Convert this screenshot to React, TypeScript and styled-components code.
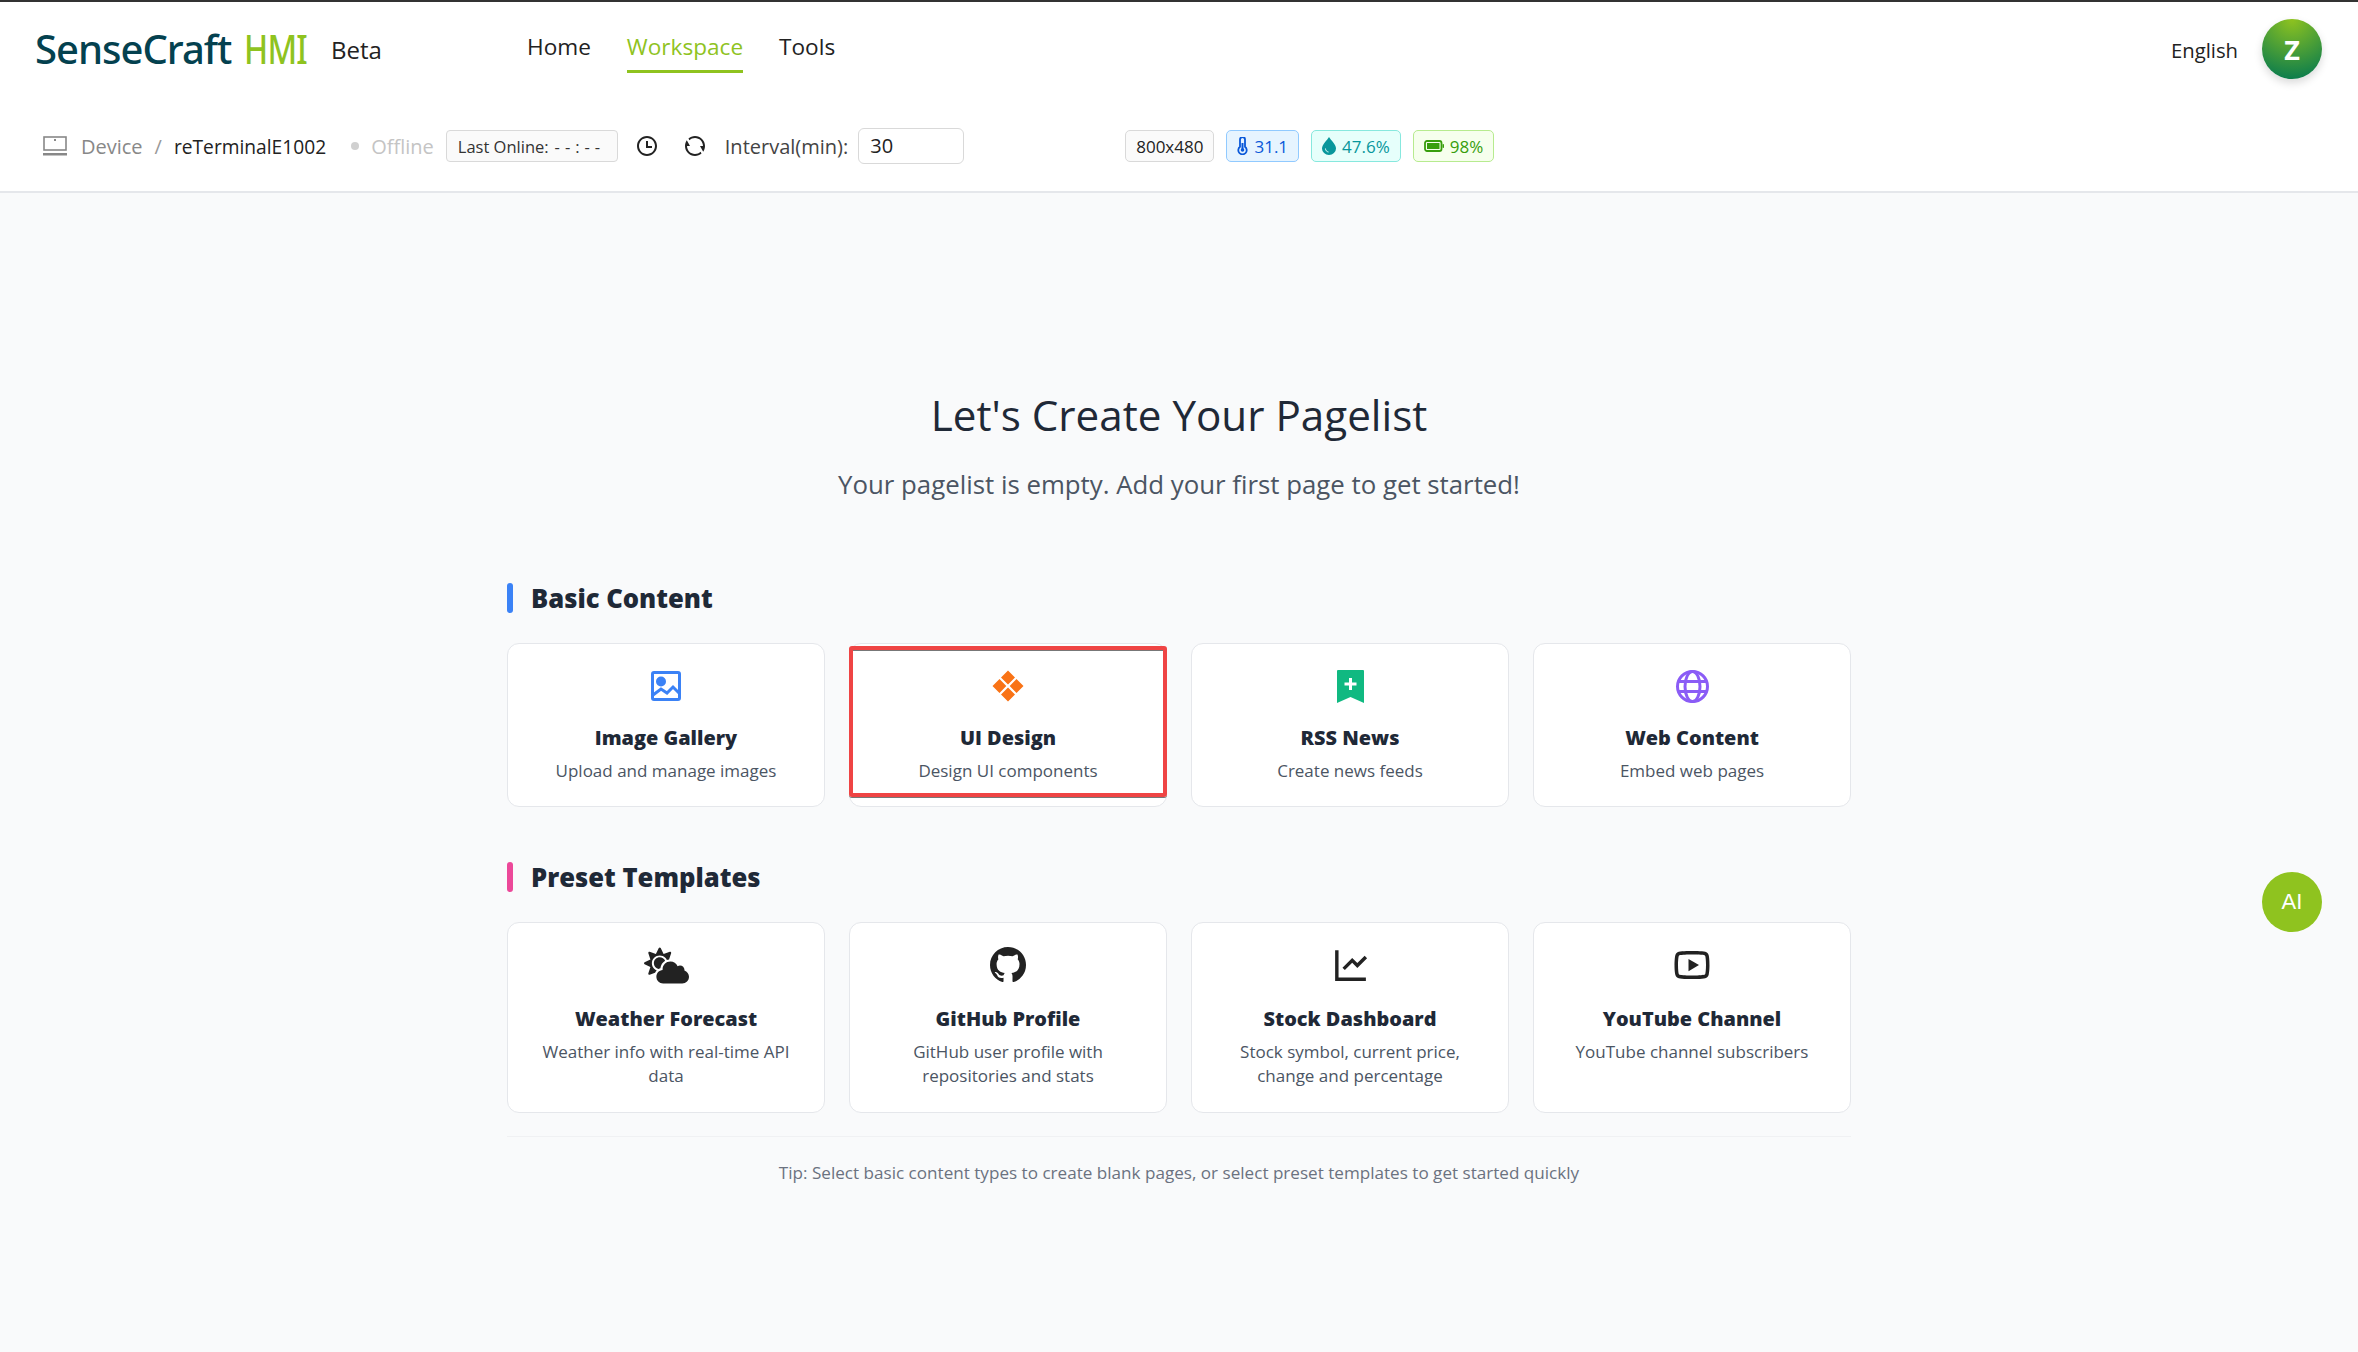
import React from "react";
import styled, { createGlobalStyle } from "styled-components";
import {
  RiLineChartLine,
  RiRefreshLine,
  RiTimeLine,
  RiYoutubeLine,
} from "react-icons/ri";
import { FaCloudSun } from "react-icons/fa";
import { BsGithub } from "react-icons/bs";

const GlobalStyle = createGlobalStyle`
  html, body {
    margin: 0;
    padding: 0;
    background: #f9fafb;
    font-family: "Open Sans", "Noto Sans", sans-serif;
  }
  * { box-sizing: border-box; }
`;

const Page = styled.div`
  position: relative;
  height: 1352px;
  display: flex;
  flex-direction: column;
  border-top: 2px solid #333;
  background: #f9fafb;
  overflow: hidden;
`;

const Top = styled.header`
  background: #fff;
  border-bottom: 2px solid #e5e7eb;
  height: 191px;
  flex: none;
`;

const HeaderRow = styled.div`
  height: 94px;
  display: flex;
  align-items: center;
  padding: 0 36px 0 35px;
`;

const Logo = styled.div`
  width: 296px;
  font-size: 40px;
  font-weight: 500;
  font-family: "Noto Sans", sans-serif;
  letter-spacing: -1px;
  color: #04414f;
  line-height: 1;
`;

const LogoAccent = styled.span`
  display: inline-block;
  margin-left: 3px;
  color: #8fc31f;
  transform: scaleX(0.81);
  transform-origin: left center;
`;

const BetaTag = styled.span`
  font-size: 24px;
  color: #222;
  width: 196px;
`;

const Nav = styled.nav`
  display: flex;
  gap: 36px;
  flex: 1;
`;

const NavItem = styled.a<{ $active?: boolean }>`
  font-size: 22.6px;
  height: 48px;
  padding-top: 9px;
  line-height: 26px;
  color: ${(p) => (p.$active ? "#8fc31f" : "#222")};
  border-bottom: 3px solid ${(p) => (p.$active ? "#8fc31f" : "transparent")};
`;

const Lang = styled.span`
  font-size: 20.3px;
  color: #222;
  margin-right: 24px;
  padding-top: 2px;
`;

const Avatar = styled.div`
  width: 60px;
  height: 60px;
  border-radius: 50%;
  background: radial-gradient(circle at 50% 0%, #8fc31f, #05794f 95%);
  box-shadow: 0 4px 8px rgba(0, 0, 0, 0.15);
  color: #fff;
  font-weight: 700;
  font-size: 27px;
  display: flex;
  align-items: center;
  justify-content: center;
`;

const InfoRow = styled.div`
  display: flex;
  align-items: center;
  height: 50px;
  margin-top: 25px;
  padding-left: 43px;
  font-size: 20px;
`;

const DeviceGlyph = styled.svg`
  width: 24px;
  height: 20px;
  margin-right: 14px;
  color: #888;
`;

const Crumb = styled.span`
  color: #888;
`;

const CurrentCrumb = styled.span`
  color: #222;
  font-size: 19.2px;
`;

const Slash = styled.span`
  color: #999;
  margin: 0 12px;
`;

const Dot = styled.i`
  width: 8px;
  height: 8px;
  border-radius: 50%;
  background: #d0d0d0;
  margin: 0 12px 0 25px;
`;

const OfflineText = styled.span`
  color: #c4c4c4;
`;

const LastOnline = styled.div`
  height: 32px;
  width: 172px;
  margin-left: 12px;
  padding-left: 11px;
  border: 1px solid #d9d9d9;
  border-radius: 4px;
  background: #fafafa;
  font-size: 16.5px;
  color: #333;
  display: flex;
  align-items: center;
  white-space: pre;
`;

const Dashes = styled.span`
  letter-spacing: 5px;
  margin-left: 6px;
`;

const ToolIcon = styled.span<{ $gap: number }>`
  display: flex;
  margin-left: ${(p) => p.$gap}px;
  font-size: 24px;
  color: #222;
`;

const IntervalLabel = styled.span`
  margin-left: 18px;
  color: #444;
`;

const IntervalInput = styled.div`
  width: 106px;
  height: 36px;
  margin-left: 10px;
  padding: 0 11px;
  border: 1px solid #d9d9d9;
  border-radius: 6px;
  color: #222;
  line-height: 34px;
`;

const Tags = styled.div`
  display: flex;
  gap: 12px;
  margin-left: 161px;
`;

const Tag = styled.div<{ $bg: string; $line: string; $fg: string }>`
  height: 32px;
  padding: 0 10px;
  display: flex;
  align-items: center;
  gap: 6px;
  border: 1px solid ${(p) => p.$line};
  border-radius: 5px;
  background: ${(p) => p.$bg};
  color: ${(p) => p.$fg};
  font-size: 17px;
`;

const Main = styled.main`
  width: 1344px;
  margin: 0 auto;
  padding-top: 196px;
`;

const Title = styled.h1`
  margin: 0;
  text-align: center;
  font-size: 42.2px;
  line-height: 52px;
  font-weight: 400;
  color: #1f2937;
`;

const Sub = styled.p`
  margin: 25px 0 0;
  text-align: center;
  font-size: 25.8px;
  line-height: 36px;
  color: #4b5563;
`;

const SectionHead = styled.h2<{ $accent: string; $top: number }>`
  margin: ${(p) => p.$top}px 0 30px;
  height: 30px;
  display: flex;
  align-items: center;
  gap: 18px;
  font-size: 25.6px;
  font-weight: 800;
  color: #1f2937;
  &::before {
    content: "";
    width: 6px;
    height: 30px;
    border-radius: 3px;
    background: ${(p) => p.$accent};
  }
`;

const Grid = styled.div`
  display: grid;
  grid-template-columns: repeat(4, 1fr);
  gap: 24px;
`;

const Card = styled.div<{ $tall?: boolean }>`
  position: relative;
  height: ${(p) => (p.$tall ? 191 : 164)}px;
  padding: 24px 28px 0;
  background: #fff;
  border: 1px solid #e5e7eb;
  border-radius: 12px;
  text-align: center;
`;

const IconSlot = styled.div<{ $color: string }>`
  height: 36px;
  display: flex;
  align-items: center;
  justify-content: center;
  color: ${(p) => p.$color};
  font-size: 36px;
`;

const CardTitle = styled.div<{ $tall?: boolean }>`
  margin-top: ${(p) => (p.$tall ? 22 : 20)}px;
  font-size: 19.9px;
  line-height: 28px;
  font-weight: 800;
  color: #1f2937;
`;

const CardText = styled.div`
  margin-top: 7px;
  font-size: 17px;
  line-height: 24px;
  color: #4b5563;
`;

const Highlight = styled.div`
  position: absolute;
  left: -1px;
  right: -1px;
  top: 2px;
  bottom: 9px;
  border: 4px solid #ef4444;
  border-radius: 3px;
  box-shadow: inset 0 1px 0 #777, 0 1px 0 #777;
`;

const Tip = styled.div`
  margin-top: 23px;
  padding-top: 24px;
  border-top: 1px solid #f0f1f3;
  text-align: center;
  font-size: 17.1px;
  line-height: 24px;
  color: #6b7280;
`;

const AiButton = styled.div`
  position: absolute;
  left: 2262px;
  top: 870px;
  width: 60px;
  height: 60px;
  border-radius: 50%;
  background: #8fc31f;
  color: #fff;
  font-family: "Liberation Sans", sans-serif;
  font-size: 22px;
  display: flex;
  align-items: center;
  justify-content: center;
`;

const DeviceIcon = () => (
  <DeviceGlyph viewBox="0 0 24 20" fill="none">
    <rect x="1" y="1" width="22" height="13" stroke="currentColor" strokeWidth="1.600" />
    <rect x="11" y="3" width="2" height="2" fill="currentColor" />
    <rect x="0" y="17" width="24" height="2.500" fill="currentColor" />
  </DeviceGlyph>
);

const ThermoIcon = () => (
  <svg width="11" height="18" viewBox="0 0 11 18" fill="none">
    <path
      d="M3 2.500a2.500 2.500 0 0 1 5 0v7.300a4.200 4.200 0 1 1-5 0z"
      stroke="currentColor"
      strokeWidth="1.800"
    />
    <path d="M5.500 6v7" stroke="currentColor" strokeWidth="2" />
    <circle cx="5.500" cy="13" r="1.800" fill="currentColor" />
  </svg>
);

const DropIcon = () => (
  <svg width="14" height="18" viewBox="0 0 14 18">
    <path d="M7 0c2 3.500 7 7.500 7 11.500A7 6.500 0 0 1 0 11.500C0 7.500 5 3.500 7 0z" fill="currentColor" />
    <path d="M3.500 11.500c0 2 1.200 3.200 3 3.500" stroke="#e6fffb" strokeWidth="1" fill="none" />
  </svg>
);

const BatteryIcon = () => (
  <svg width="20" height="12" viewBox="0 0 20 12" fill="none">
    <rect x="1" y="1" width="16.500" height="10" rx="2" stroke="currentColor" strokeWidth="1.800" />
    <rect x="3" y="3" width="12.500" height="6" fill="currentColor" />
    <rect x="18.500" y="4" width="1.500" height="4" rx="0.700" fill="currentColor" />
  </svg>
);

const ImageIcon = () => (
  <svg width="30" height="30" viewBox="0 0 30 30" fill="none">
    <rect x="1.500" y="1.500" width="27" height="27" rx="1.500" stroke="currentColor" strokeWidth="3" />
    <circle cx="10" cy="10.500" r="5" fill="currentColor" />
    <path d="M2 24l8-6 6 4 6-6 6 6" stroke="currentColor" strokeWidth="3" />
  </svg>
);

const DiamondsIcon = () => (
  <svg width="32" height="32" viewBox="0 0 32 32" fill="currentColor">
    <path d="M16 .5l7 7-7 7-7-7zM7.500 9l6.800 7-6.800 7-7-7zM24.500 9l7 7-7 7-6.800-7zM16 17.500l7 7-7 7-7-7z" />
  </svg>
);

const BookmarkPlusIcon = () => (
  <svg width="27" height="33" viewBox="0 0 27 33">
    <path d="M1 0h25a1 1 0 0 1 1 1v32l-13.500-6L0 33V1a1 1 0 0 1 1-1z" fill="currentColor" />
    <path d="M13.500 8v12M7.500 14h12" stroke="#fff" strokeWidth="3" />
  </svg>
);

const GlobeIcon = () => (
  <svg width="33" height="33" viewBox="0 0 33 33" fill="none" stroke="currentColor" strokeWidth="3">
    <circle cx="16.500" cy="16.500" r="15" />
    <ellipse cx="16.500" cy="16.500" rx="7.500" ry="15" />
    <path d="M2 11.500h29M2 21.500h29" />
  </svg>
);

const basics = [
  { title: "Image Gallery", text: "Upload and manage images", color: "#3b82f6", icon: <ImageIcon /> },
  { title: "UI Design", text: "Design UI components", color: "#f97316", icon: <DiamondsIcon />, marked: true },
  { title: "RSS News", text: "Create news feeds", color: "#10b981", icon: <BookmarkPlusIcon /> },
  { title: "Web Content", text: "Embed web pages", color: "#8b5cf6", icon: <GlobeIcon /> },
];

const presets = [
  { title: "Weather Forecast", text: "Weather info with real-time API data", icon: <FaCloudSun size={45} /> },
  { title: "GitHub Profile", text: "GitHub user profile with repositories and stats", icon: <BsGithub size={36} /> },
  { title: "Stock Dashboard", text: "Stock symbol, current price, change and percentage", icon: <RiLineChartLine size={41} /> },
  { title: "YouTube Channel", text: "YouTube channel subscribers", icon: <RiYoutubeLine size={42} /> },
];

const App: React.FC = () => {
  return (
    <Page>
      <GlobalStyle />
      <Top>
        <HeaderRow>
          <Logo>
            SenseCraft <LogoAccent>HMI</LogoAccent>
          </Logo>
          <BetaTag>Beta</BetaTag>
          <Nav>
            <NavItem>Home</NavItem>
            <NavItem $active>Workspace</NavItem>
            <NavItem>Tools</NavItem>
          </Nav>
          <Lang>English</Lang>
          <Avatar>Z</Avatar>
        </HeaderRow>
        <InfoRow>
          <DeviceIcon />
          <Crumb>Device</Crumb>
          <Slash>/</Slash>
          <CurrentCrumb>reTerminalE1002</CurrentCrumb>
          <Dot />
          <OfflineText>Offline</OfflineText>
          <LastOnline>
            Last Online:<Dashes>--:--</Dashes>
          </LastOnline>
          <ToolIcon $gap={17}>
            <RiTimeLine />
          </ToolIcon>
          <ToolIcon $gap={24}>
            <RiRefreshLine />
          </ToolIcon>
          <IntervalLabel>Interval(min):</IntervalLabel>
          <IntervalInput>30</IntervalInput>
          <Tags>
            <Tag $bg="#fafafa" $line="#d9d9d9" $fg="#222">800x480</Tag>
            <Tag $bg="#e6f4ff" $line="#91caff" $fg="#0958d9">
              <ThermoIcon />
              31.1
            </Tag>
            <Tag $bg="#e6fffb" $line="#87e8de" $fg="#08979c">
              <DropIcon />
              47.6%
            </Tag>
            <Tag $bg="#f6ffed" $line="#b7eb8f" $fg="#389e0d">
              <BatteryIcon />
              98%
            </Tag>
          </Tags>
        </InfoRow>
      </Top>
      <Main>
        <Title>Let's Create Your Pagelist</Title>
        <Sub>Your pagelist is empty. Add your first page to get started!</Sub>
        <SectionHead $accent="#3b82f6" $top={81}>Basic Content</SectionHead>
        <Grid>
          {basics.map((b) => (
            <Card key={b.title}>
              <IconSlot $color={b.color}>{b.icon}</IconSlot>
              <CardTitle>{b.title}</CardTitle>
              <CardText>{b.text}</CardText>
              {b.marked && <Highlight />}
            </Card>
          ))}
        </Grid>
        <SectionHead $accent="#ec4899" $top={55}>Preset Templates</SectionHead>
        <Grid>
          {presets.map((b) => (
            <Card key={b.title} $tall>
              <IconSlot $color="#222">{b.icon}</IconSlot>
              <CardTitle $tall>{b.title}</CardTitle>
              <CardText>{b.text}</CardText>
            </Card>
          ))}
        </Grid>
        <Tip>Tip: Select basic content types to create blank pages, or select preset templates to get started quickly</Tip>
      </Main>
      <AiButton>AI</AiButton>
    </Page>
  );
};

export default App;
